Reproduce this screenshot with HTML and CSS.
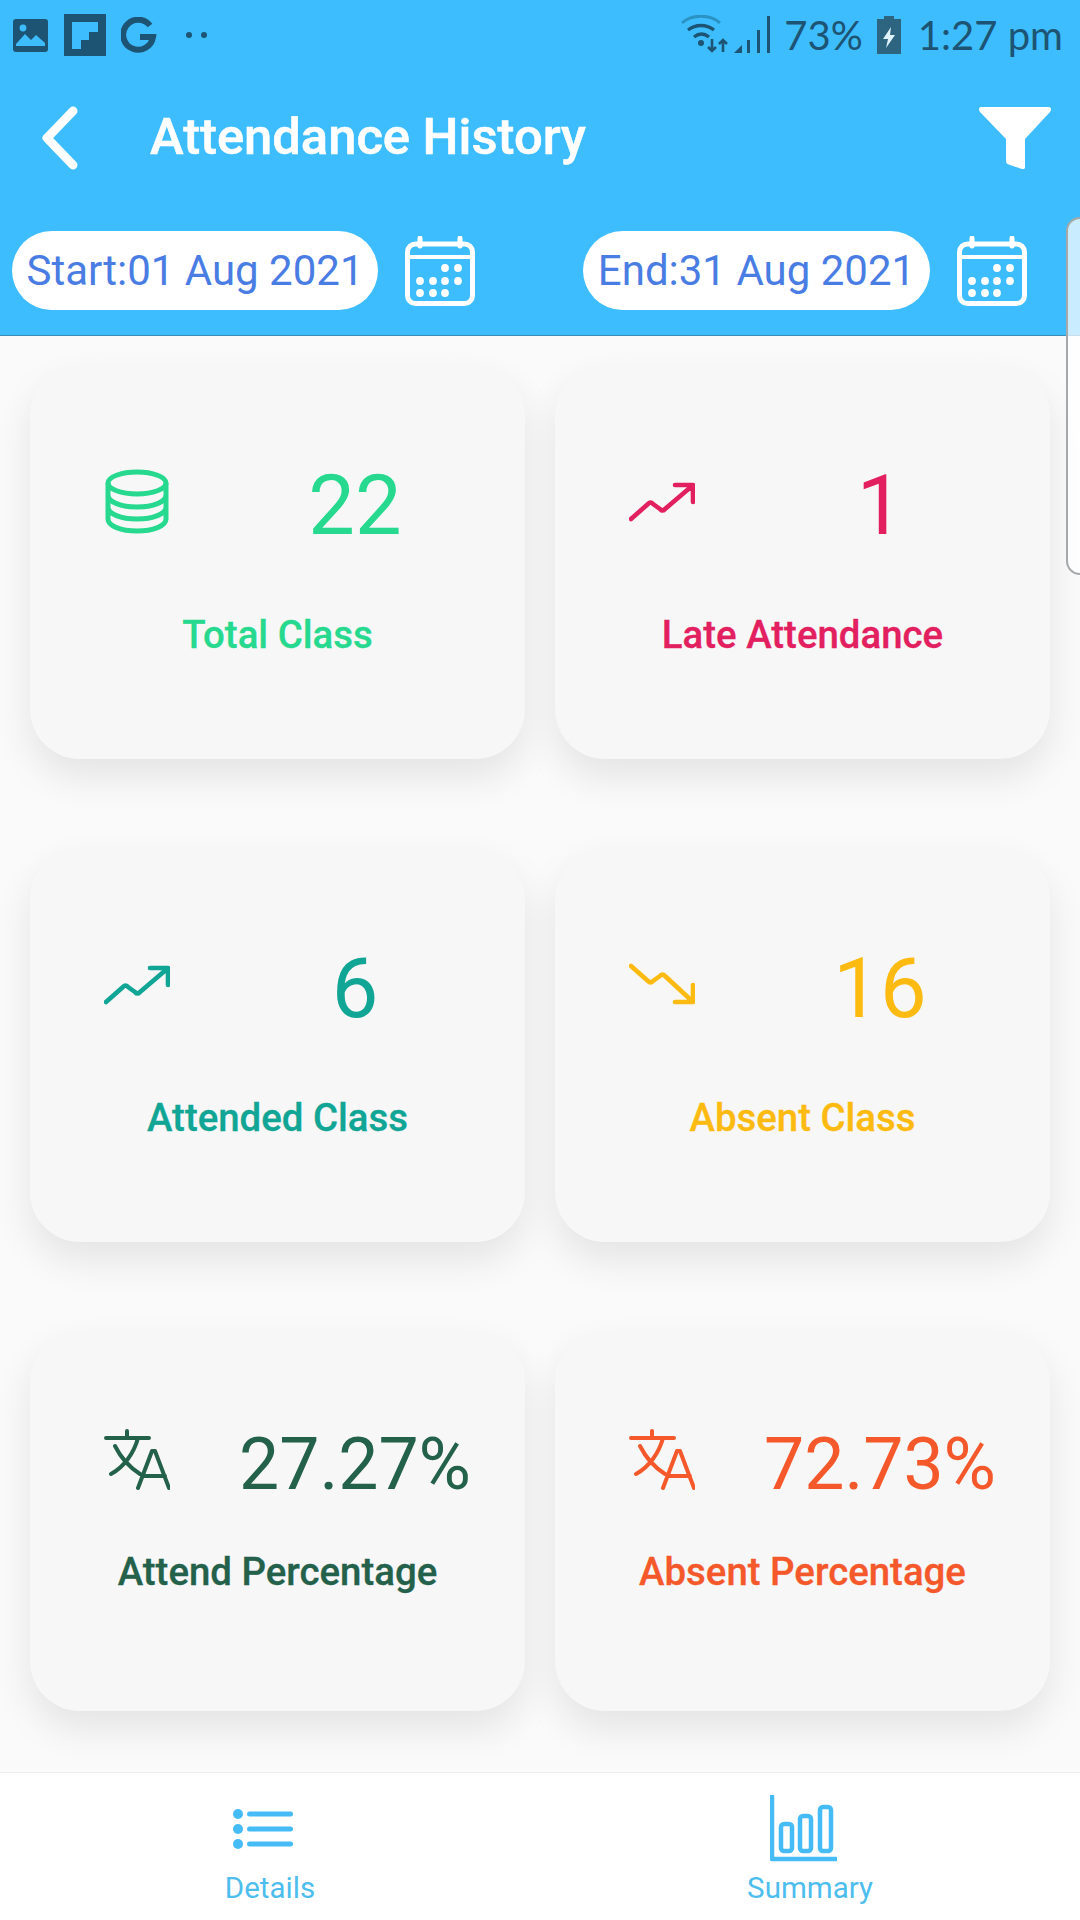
FILE: index.html
```html
<!DOCTYPE html>
<html lang="en">
<head>
<meta charset="utf-8">
<title>Attendance History</title>
<link rel="stylesheet" href="styles.css">
</head>
<body>
<div class="app">
  <header class="header">
    <div class="status">
      <div class="status-left">
        <svg class="ic-image" viewBox="0 0 35 33"><rect width="35" height="33" rx="3" fill="#1d5473"/><path d="M3 25 12 15l6 6 5-5 9 8v3H3z" fill="#3dbdfe"/><circle cx="10" cy="9" r="3.4" fill="#3dbdfe"/></svg>
        <svg class="ic-flip" viewBox="0 0 42 42"><rect width="42" height="42" fill="#1d5473"/><path d="M8 8h26v10h-9v8h-8v9H8z" fill="#3dbdfe"/></svg>
        <svg class="ic-g" viewBox="0 0 36 36"><path d="M29 8.500A15 15 0 1 0 32 20H19" fill="none" stroke="#1d5473" stroke-width="6"/></svg>
        <span class="dots"><i></i><i></i></span>
      </div>
      <div class="status-right">
        <svg class="ic-wifi" viewBox="0 0 48 40"><path d="M2 8C12-1 30-1 40 8" fill="none" stroke="#2b92c4" stroke-width="3"/><path d="M8 15c8-6 18-6 26 0M14 22c5-4 10-4 15 0" fill="none" stroke="#1d5473" stroke-width="3.4"/><circle cx="21" cy="28" r="3" fill="#1d5473"/><path d="M32 24v12m-4-4 4 4 4-4M43 37V25m-4 4 4-4 4 4" fill="none" stroke="#1d5473" stroke-width="2.6"/></svg>
        <svg class="ic-signal" viewBox="0 0 36 38"><path d="M0 37 8 29v8zM13 24h3v13h-3zM23 14h3v23h-3zM33 0h3v37h-3z" fill="#1d5473"/></svg>
        <span class="status-text">73%</span>
        <svg class="ic-batt" viewBox="0 0 24 38"><path d="M7 0h10v3h7v35H0V3h7z" fill="#2d6480"/><path d="M14 11 6 23h5l-2 9 9-13h-5z" fill="#dff3fd"/></svg>
        <span class="status-text">1:27 pm</span>
      </div>
    </div>
    <div class="toolbar">
      <svg class="ic-back" viewBox="0 0 36 64"><path d="M31 5 5 32l26 27" fill="none" stroke="#fff" stroke-width="9" stroke-linecap="round" stroke-linejoin="round"/></svg>
      <h1 class="title">Attendance History</h1>
      <svg class="ic-filter" viewBox="0 0 72 62"><path d="M3 0h66c3 0 4 2 2 5L46 32v28c0 2-1 2-3 2l-12-4c-3-1-4-2-4-4V32L1 5C-1 2 0 0 3 0z" fill="#fff"/></svg>
    </div>
    <div class="dates">
      <div class="date-group">
        <div class="pill pill-start">Start:01 Aug 2021</div>
        <svg class="ic-cal" viewBox="0 0 70 70"><use href="#cal"/></svg>
      </div>
      <div class="date-group">
        <div class="pill pill-end">End:31 Aug 2021</div>
        <svg class="ic-cal" viewBox="0 0 70 70"><use href="#cal"/></svg>
      </div>
    </div>
  </header>

  <main class="main">
    <section class="card green">
      <div class="card-top">
        <svg class="ic" viewBox="0 0 66 66"><g fill="none" stroke="currentColor" stroke-width="5"><ellipse cx="33" cy="14" rx="29" ry="11"/><path d="M4 14v36c0 7 13 12 29 12s29-5 29-12V14M4 26c0 7 13 12 29 12s29-5 29-12M4 38c0 7 13 12 29 12s29-5 29-12"/></g></svg>
        <div class="num">22</div>
      </div>
      <div class="label">Total Class</div>
    </section>
    <section class="card pink">
      <div class="card-top">
        <svg class="ic" viewBox="0 0 66 66"><path d="M2 50 19 35c2-2 3-2 5 0l7 5c2 2 3 2 5 0l27-23M46 16h18v17" fill="none" stroke="currentColor" stroke-width="4.600" stroke-linecap="round" stroke-linejoin="round"/></svg>
        <div class="num">1</div>
      </div>
      <div class="label">Late Attendance</div>
    </section>
    <section class="card teal">
      <div class="card-top">
        <svg class="ic" viewBox="0 0 66 66"><path d="M2 50 19 35c2-2 3-2 5 0l7 5c2 2 3 2 5 0l27-23M46 16h18v17" fill="none" stroke="currentColor" stroke-width="4.600" stroke-linecap="round" stroke-linejoin="round"/></svg>
        <div class="num">6</div>
      </div>
      <div class="label">Attended Class</div>
    </section>
    <section class="card amber">
      <div class="card-top">
        <svg class="ic" viewBox="0 0 66 66"><path d="M2 14 19 29c2 2 3 2 5 0l7-5c2-2 3-2 5 0l27 25M46 50h18V33" fill="none" stroke="currentColor" stroke-width="4.600" stroke-linecap="round" stroke-linejoin="round"/></svg>
        <div class="num">16</div>
      </div>
      <div class="label">Absent Class</div>
    </section>
    <section class="card card-short forest">
      <div class="card-top">
        <svg class="ic" viewBox="0 0 66 66"><path d="M2 10h43M23 3v7M34 10C30 25 20 39 7 46M11 18c6 12 14 21 25 28M34 60 48 23h3l14 37M39 48h22" fill="none" stroke="currentColor" stroke-width="4" stroke-linecap="round" stroke-linejoin="round"/></svg>
        <div class="num num-small">27.27%</div>
      </div>
      <div class="label">Attend Percentage</div>
    </section>
    <section class="card card-short orange">
      <div class="card-top">
        <svg class="ic" viewBox="0 0 66 66"><path d="M2 10h43M23 3v7M34 10C30 25 20 39 7 46M11 18c6 12 14 21 25 28M34 60 48 23h3l14 37M39 48h22" fill="none" stroke="currentColor" stroke-width="4" stroke-linecap="round" stroke-linejoin="round"/></svg>
        <div class="num num-small">72.73%</div>
      </div>
      <div class="label">Absent Percentage</div>
    </section>
  </main>

  <nav class="nav">
    <div class="nav-item">
      <div class="nav-icon"><svg class="ic-list" viewBox="0 0 60 40"><g fill="#45bcf6"><circle cx="5" cy="5" r="5"/><circle cx="5" cy="20" r="5"/><circle cx="5" cy="35" r="5"/><rect x="14" y="2.500" width="46" height="5" rx="2.500"/><rect x="14" y="17.500" width="46" height="5" rx="2.500"/><rect x="14" y="32.500" width="46" height="5" rx="2.500"/></g></svg></div>
      <div class="nav-label">Details</div>
    </div>
    <div class="nav-item">
      <div class="nav-icon"><svg class="ic-chart" viewBox="0 0 67 68"><g fill="none" stroke="#45bcf6" stroke-width="4.500"><path d="M2 1v63h64" stroke-linecap="round" stroke-linejoin="round"/><rect x="11" y="29" width="11" height="27" rx="3"/><rect x="30" y="21" width="11" height="35" rx="3"/><rect x="50" y="12" width="11" height="44" rx="3"/></g></svg></div>
      <div class="nav-label">Summary</div>
    </div>
  </nav>

  <div class="edge-tab"></div>
</div>

<svg class="defs" width="0" height="0">
  <symbol id="cal" viewBox="0 0 70 70">
    <path d="M15 2v8M55 2v8" stroke="#fff" stroke-width="5" stroke-linecap="round"/>
    <rect x="2.500" y="8" width="65" height="59.500" rx="8" fill="none" stroke="#fff" stroke-width="5"/>
    <path d="M2 21h66" stroke="#fff" stroke-width="4"/>
    <g fill="#fff">
      <circle cx="40" cy="32" r="3.900"/><circle cx="53" cy="32" r="3.900"/>
      <circle cx="15" cy="45" r="3.900"/><circle cx="28" cy="45" r="3.900"/><circle cx="40" cy="45" r="3.900"/><circle cx="53" cy="45" r="3.900"/>
      <circle cx="15" cy="57" r="3.900"/><circle cx="28" cy="57" r="3.900"/><circle cx="40" cy="57" r="3.900"/>
    </g>
  </symbol>
</svg>
</body>
</html>
```

FILE: styles.css
```css
* { box-sizing: border-box; }
html, body { margin: 0; padding: 0; }
body { font-family: Roboto, "Liberation Sans", sans-serif; background: #fafafa; }
.defs { position: absolute; }

.app { position: relative; width: 1080px; height: 1920px; display: flex; flex-direction: column; overflow: hidden; background: #fafafa; }

.header { height: 336px; background: #3dbdfe; border-bottom: 1px solid #3a8db8; flex: none; }

.status { height: 70px; display: flex; justify-content: space-between; align-items: center; padding: 0 17px 0 13px; }
.status-left { display: flex; align-items: center; }
.ic-image { width: 35px; height: 33px; }
.ic-flip { width: 42px; height: 42px; margin-left: 16px; }
.ic-g { width: 36px; height: 36px; margin-left: 15px; }
.dots { display: flex; gap: 9px; margin-left: 29px; }
.dots i { width: 6px; height: 6px; border-radius: 50%; background: #1d5473; }
.status-right { display: flex; align-items: center; }
.status-text { font-family: "Lato", sans-serif; font-size: 40px; font-weight: 400; color: #1d5473; white-space: nowrap; }
.ic-wifi { width: 48px; height: 40px; }
.ic-signal { width: 36px; height: 38px; margin-left: 6px; margin-right: 14px; }
.ic-batt { width: 24px; height: 38px; margin: 0 17px 0 14px; }

.toolbar { height: 136px; display: flex; align-items: center; padding: 0 29px 0 42px; }
.ic-back { width: 36px; height: 64px; flex: none; }
.title { margin: 0 0 4px 72px; font-size: 50.700px; font-weight: 500; color: #fff; -webkit-text-stroke: .6px #fff; }
.ic-filter { width: 72px; height: 62px; margin-left: auto; }

.dates { display: flex; gap: 108px; padding: 25px 0 0 12px; }
.date-group { display: flex; align-items: center; gap: 27px; }
.pill { height: 79px; border-radius: 40px; background: #fff; color: #4a7de3; font-size: 42px; display: flex; align-items: center; justify-content: center; white-space: nowrap; }
.pill-start { width: 366px; }
.pill-end { width: 347px; }
.ic-cal { width: 70px; height: 70px; }

.main { flex: 1; display: grid; grid-template-columns: 495px 495px; grid-template-rows: 393px 393px 379px; gap: 90px 30px; padding: 30px 30px 0; }
.card { background: #f7f7f7; border-radius: 50px; box-shadow: 0 18px 38px rgba(0, 0, 0, .09); padding-top: 90px; display: flex; flex-direction: column; }
.card-short { padding-top: 83px; }
.card-top { height: 100px; display: grid; grid-template-columns: 66px 280px; column-gap: 45px; align-items: center; padding-left: 74px; }
.card-top .ic { margin-top: -8px; }
.num { font-size: 83px; line-height: 100px; text-align: center; }
.num-small { font-size: 71.500px; }
.ic { width: 66px; height: 66px; }
.label { margin-top: 56px; font-size: 38.400px; line-height: 46px; font-weight: 500; text-align: center; -webkit-text-stroke: .3px currentColor; }
.card-short .label { margin-top: 34px; }

.green { color: #26d98f; }
.pink { color: #e3205f; }
.teal { color: #10a594; }
.amber { color: #fdbb12; }
.forest { color: #24614b; }
.orange { color: #f5592b; }

.nav { height: 148px; flex: none; background: #fff; border-top: 1px solid #eee; display: flex; padding-top: 21px; }
.nav-item { flex: 1; display: flex; flex-direction: column; align-items: center; }
.nav-icon { height: 70px; display: flex; align-items: center; margin-right: 14px; }
.ic-list { width: 60px; height: 40px; }
.ic-chart { width: 67px; height: 68px; }
.nav-label { margin-top: 7px; font-size: 29.500px; line-height: 34px; color: #4dbdee; }

.edge-tab { position: absolute; left: 1066px; top: 217px; width: 30px; height: 358px; border: 2px solid #a5a9ab; border-radius: 14px 0 0 14px; background: rgba(255, 255, 255, .72); }
```
